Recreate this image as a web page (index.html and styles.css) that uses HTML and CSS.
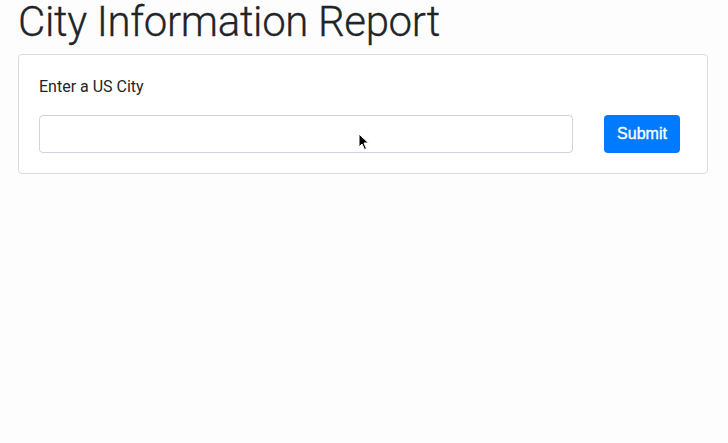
FILE: index.html
```html
<!DOCTYPE html>
<html>
<head>
<meta charset="utf-8">
<link rel="stylesheet" href="styles.css">
</head>
<body>
<h1 class="title">City Information Report</h1>
<div class="card">
  <label class="label" for="city">Enter a US City</label>
  <div class="row">
    <input class="input" id="city" type="text">
    <button class="btn">Submit</button>
  </div>
</div>
<svg class="cursor" width="12" height="18" viewBox="0 0 12 18">
  <path d="M1 1 L1 14 L4 11 L6.5 16.5 L8.5 15.5 L6 10 L10.5 10 Z" fill="#000" stroke="#fff" stroke-width="1"/>
</svg>
</body>
</html>
```
FILE: styles.css
```css
html, body { margin: 0; padding: 0; background: #fdfdfd; }
body {
  padding: 0 20px 0 18px;
  font-family: Roboto, "Noto Sans", sans-serif;
  color: #212529;
  position: relative;
}
.title {
  margin: 0 0 10px 0;
  font-family: Roboto, sans-serif;
  font-weight: 300;
  font-size: 42px;
  line-height: 44px;
  letter-spacing: -0.35px;
  color: #212529;
  -webkit-text-stroke: 0.3px #212529;
}
.card {
  border: 1px solid #dcdcdc;
  border-radius: 4px;
  padding: 20px;
  background: #fff;
}
.label {
  display: block;
  font-size: 16px;
  line-height: 24px;
  color: #212529;
  margin-bottom: 16px;
}
.row { display: flex; align-items: center; }
.input {
  box-sizing: border-box;
  width: 534px;
  height: 38px;
  border: 1px solid #ced4da;
  border-radius: 4px;
  background: #fff;
  margin: 0;
}
.btn {
  margin-left: 31px;
  width: 76px;
  height: 38px;
  border: none;
  border-radius: 4px;
  background: #007bff;
  color: #fff;
  font-family: "Liberation Sans", Arial, sans-serif;
  font-size: 16px;
  -webkit-text-stroke: 0.35px #fff;
}
.cursor { position: absolute; left: 358px; top: 133px; }
```
